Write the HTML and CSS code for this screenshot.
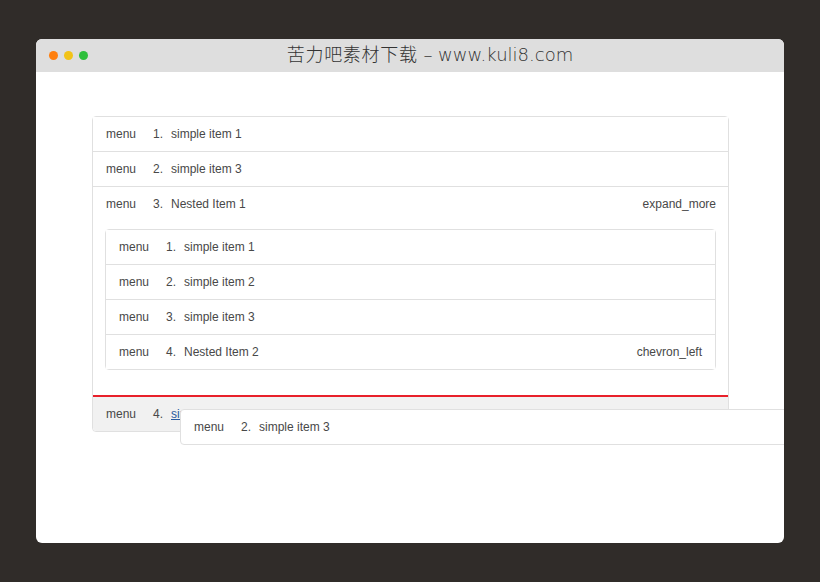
FILE: index.html
```html
<!DOCTYPE html>
<html lang="zh">
<head>
<meta charset="utf-8">
<title>Nested list</title>
<link rel="stylesheet" href="styles.css">
</head>
<body>
<div class="window">
  <header class="titlebar">
    <div class="dots"><i class="dot orange"></i><i class="dot yellow"></i><i class="dot green"></i></div>
    <h1 class="title"><span class="title-cjk">苦力吧素材下载</span> – www.kuli8.com</h1>
  </header>
  <main class="content">
    <div class="list">
      <div class="row"><span class="handle">menu</span><span class="num">1.</span><span class="label">simple item 1</span></div>
      <div class="row"><span class="handle">menu</span><span class="num">2.</span><span class="label">simple item 3</span></div>
      <div class="group">
        <div class="row plain"><span class="handle">menu</span><span class="num">3.</span><span class="label">Nested Item 1</span><span class="trail">expand_more</span></div>
        <div class="list nested">
          <div class="row"><span class="handle">menu</span><span class="num">1.</span><span class="label">simple item 1</span></div>
          <div class="row"><span class="handle">menu</span><span class="num">2.</span><span class="label">simple item 2</span></div>
          <div class="row"><span class="handle">menu</span><span class="num">3.</span><span class="label">simple item 3</span></div>
          <div class="row"><span class="handle">menu</span><span class="num">4.</span><span class="label">Nested Item 2</span><span class="trail">chevron_left</span></div>
        </div>
      </div>
      <div class="row hover"><span class="handle">menu</span><span class="num">4.</span><a class="label link" href="#">simple item 4</a></div>
    </div>
    <div class="row drag"><span class="handle">menu</span><span class="num">2.</span><span class="label">simple item 3</span></div>
  </main>
</div>
</body>
</html>
```
FILE: styles.css
```css
* { box-sizing: border-box; }
html, body { height: 100%; }
body {
  margin: 0;
  padding: 39px 36px;
  background: #302c29;
  font: 12px/17px "Liberation Sans", Arial, sans-serif;
  color: #484848;
  overflow: hidden;
}
.window {
  position: relative;
  width: 748px;
  height: 504px;
  background: #fff;
  border-radius: 6px;
  overflow: hidden;
}
.titlebar {
  position: relative;
  height: 33px;
  padding-left: 40px;
  background: #dedede;
  display: flex;
  align-items: center;
  justify-content: center;
}
.dots {
  position: absolute;
  left: 13px;
  top: 12px;
  display: flex;
  gap: 6px;
}
.dot { width: 9px; height: 9px; border-radius: 50%; }
.orange { background: #ff7f0e; }
.yellow { background: #f2c318; }
.green { background: #2fbf3c; }
.title {
  margin: 0 0 1px;
  font: 200 18px/32px "DejaVu Sans", "Noto Sans CJK SC", sans-serif;
  color: #333;
  white-space: nowrap;
}
.title-cjk { letter-spacing: 0.7px; }
.content { padding: 44px 55px 0 56px; }
.list {
  border: 1px solid #e0e0e0;
  border-radius: 4px;
  width: 637px;
}
.row {
  display: flex;
  align-items: center;
  height: 35px;
  padding: 0 12px 0 13px;
  border-bottom: 1px solid #e0e0e0;
  background: #fff;
}
.list > .row:last-child { border-bottom: 0; height: 34px; }
.handle { width: 47px; }
.num { width: 18px; }
.trail { margin-left: auto; }
.group {
  border-bottom: 2px solid #e8202a;
  padding-bottom: 25px;
}
.row.plain { border-bottom: 0; height: 34px; }
.nested { width: 611px; margin: 8px 0 0 12px; }
.nested .row { padding-right: 13px; }
.list > .row.hover {
  background: #f1f1f1;
  height: 34px;
  border-radius: 0 0 4px 4px;
}
.link { color: #2a5a9e; text-decoration: underline; }
.drag {
  position: absolute;
  left: 144px;
  top: 370px;
  width: 640px;
  height: 36px;
  padding-top: 1px;
  border: 1px solid #e0e0e0;
  border-radius: 4px;
}
```
